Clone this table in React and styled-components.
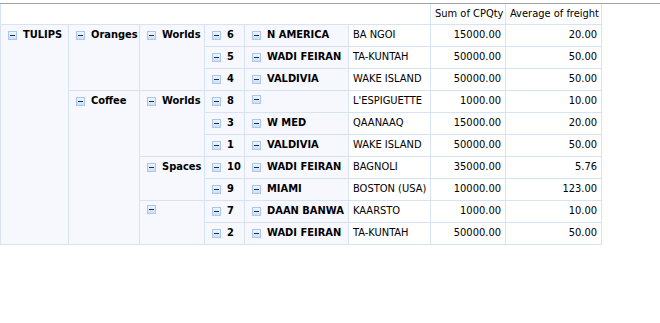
import React from "react";
import styled, { createGlobalStyle } from "styled-components";

const Global = createGlobalStyle`
  html, body { margin: 0; padding: 0; background: #ffffff; }
  body { font-family: "DejaVu Sans Condensed", "DejaVu Sans", sans-serif; font-size: 11px; color: #000; }
`;

const Page = styled.div`
  padding-top: 3px;
`;

const TopRule = styled.div`
  border-top: 1px solid #a3a3a3;
`;

const Grid = styled.table`
  border-collapse: collapse;
  table-layout: fixed;
  width: 601px;
  font-size: 11px;
`;

const HeadCell = styled.th`
  height: 17px;
  padding: 3px 4px 0;
  line-height: 14px;
  font-weight: normal;
  text-align: left;
  white-space: nowrap;
  vertical-align: top;
  background: #ffffff;
  border-left: 1px solid #d5e3f5;
  border-right: ${(p) => (p.$blank ? "none" : "1px solid #d5e3f5")};
  border-bottom: 1px solid #d5e3f5;
`;

const RowHead = styled.td`
  height: 18px;
  padding: 3px 4px 0 7px;
  line-height: 14px;
  vertical-align: top;
  background: #f6f8fd;
  border: 1px solid #d5e3f5;
  font-weight: bold;
  white-space: nowrap;
  overflow: hidden;
`;

const DataCell = styled.td`
  height: 18px;
  padding: 3px 4px 0;
  line-height: 14px;
  vertical-align: top;
  background: #ffffff;
  border: 1px solid #d5e3f5;
  text-align: ${(p) => (p.$num ? "right" : "left")};
  white-space: nowrap;
  overflow: hidden;
`;

const Label = styled.span`
  display: inline-flex;
  align-items: center;
  gap: 6px;
`;

const Toggle = styled.span`
  position: relative;
  display: inline-block;
  box-sizing: border-box;
  width: 9px;
  height: 9px;
  margin-top: 1px;
  border: 1px solid #a9c6ec;
  background: linear-gradient(#eef4fd, #cfe0f7);
  flex: none;
  &::after {
    content: "";
    position: absolute;
    left: 1px;
    right: 1px;
    top: 3px;
    height: 1px;
    background: #1b2f4f;
  }
`;

const Head = ({ children }) => (
  <Label>
    <Toggle />
    {children}
  </Label>
);

const rows = [
  { l1: ["TULIPS", 10], l2: ["Oranges", 3], l3: ["Worlds", 3], n: "6", name: "N AMERICA", dest: "BA NGOI", sum: "15000.00", avg: "20.00" },
  { n: "5", name: "WADI FEIRAN", dest: "TA-KUNTAH", sum: "50000.00", avg: "50.00" },
  { n: "4", name: "VALDIVIA", dest: "WAKE ISLAND", sum: "50000.00", avg: "50.00" },
  { l2: ["Coffee", 7], l3: ["Worlds", 3], n: "8", name: "", dest: "L'ESPIGUETTE", sum: "1000.00", avg: "10.00" },
  { n: "3", name: "W MED", dest: "QAANAAQ", sum: "15000.00", avg: "20.00" },
  { n: "1", name: "VALDIVIA", dest: "WAKE ISLAND", sum: "50000.00", avg: "50.00" },
  { l3: ["Spaces", 2], n: "10", name: "WADI FEIRAN", dest: "BAGNOLI", sum: "35000.00", avg: "5.76" },
  { n: "9", name: "MIAMI", dest: "BOSTON (USA)", sum: "10000.00", avg: "123.00" },
  { l3: ["", 2], n: "7", name: "DAAN BANWA", dest: "KAARSTO", sum: "1000.00", avg: "10.00" },
  { n: "2", name: "WADI FEIRAN", dest: "TA-KUNTAH", sum: "50000.00", avg: "50.00" },
];

const widths = [68, 71, 65, 40, 104, 82, 75, 96];

export default function App() {
  return (
    <Page>
      <Global />
      <TopRule />
      <Grid>
        <colgroup>
          {widths.map((w, i) => (
            <col key={i} style={{ width: w }} />
          ))}
        </colgroup>
        <thead>
          <tr>
            <HeadCell colSpan={6} $blank />
            <HeadCell>Sum of CPQty</HeadCell>
            <HeadCell>Average of freight</HeadCell>
          </tr>
        </thead>
        <tbody>
          {rows.map((r, i) => (
            <tr key={i}>
              {r.l1 && (
                <RowHead rowSpan={r.l1[1]}>
                  <Head>{r.l1[0]}</Head>
                </RowHead>
              )}
              {r.l2 && (
                <RowHead rowSpan={r.l2[1]}>
                  <Head>{r.l2[0]}</Head>
                </RowHead>
              )}
              {r.l3 && (
                <RowHead rowSpan={r.l3[1]}>
                  <Head>{r.l3[0]}</Head>
                </RowHead>
              )}
              <RowHead>
                <Head>{r.n}</Head>
              </RowHead>
              <RowHead>
                <Head>{r.name}</Head>
              </RowHead>
              <DataCell>{r.dest}</DataCell>
              <DataCell $num>{r.sum}</DataCell>
              <DataCell $num>{r.avg}</DataCell>
            </tr>
          ))}
        </tbody>
      </Grid>
    </Page>
  );
}
